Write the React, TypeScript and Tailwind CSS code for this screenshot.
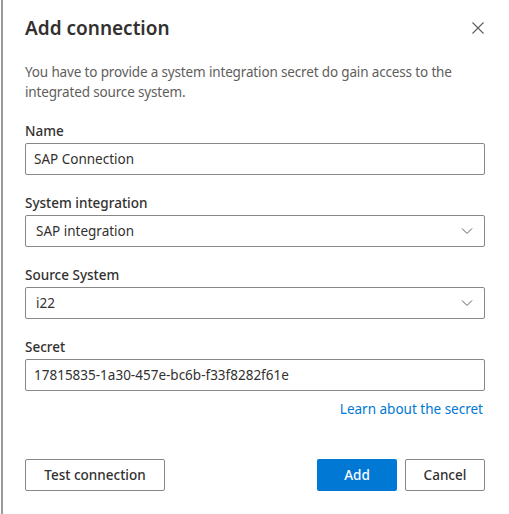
import React from 'react';

const font = { fontFamily: '"Noto Sans", "Open Sans", sans-serif' };

function Chevron() {
  return (
    <svg width="12" height="12" viewBox="0 0 12 12" className="shrink-0">
      <path d="M1 3.5 L6 8.5 L11 3.5" fill="none" stroke="#605e5c" strokeWidth="1" />
    </svg>
  );
}

function Field({ label, value, select }: { label: string; value: string; select?: boolean }) {
  return (
    <div className="flex flex-col">
      <label className="text-[13.5px] leading-[20px] font-medium text-[#323130]">{label}</label>
      <div className="mt-[2px] h-[32px] border border-[#8a8886] rounded-[2px] flex items-center justify-between pl-[8px] pr-[11px]">
        <span className={`text-[13.5px] text-[#323130] ${select ? 'pl-[2px]' : ''}`}>{value}</span>
        {select && <Chevron />}
      </div>
    </div>
  );
}

export default function App() {
  return (
    <div className="w-[509px] h-[514px] bg-white pl-px" style={font}>
      <div className="h-full border-l-2 border-[#9a9a9a] pl-[22px] pr-[24px] pt-[13px] flex flex-col">
        {/* header */}
        <div className="flex items-center justify-between h-[30px]">
          <h1 className="text-[19px] font-semibold text-[#323130] leading-[28px]">Add connection</h1>
          <svg width="12" height="12" viewBox="0 0 12 12" className="mr-px">
            <path d="M0.5 0.5 L11.5 11.5 M11.5 0.5 L0.5 11.5" stroke="#605e5c" strokeWidth="1.1" />
          </svg>
        </div>

        <p className="mt-[19px] text-[13.5px] leading-[20px] text-[#605e5c] tracking-[-0.15px]">
          You have to provide a system integration secret do gain access to the integrated source system.
        </p>

        <div className="mt-[19px] flex flex-col gap-[18px]">
          <Field label="Name" value="SAP Connection" />
          <Field label="System integration" value="SAP integration" select />
          <Field label="Source System" value="i22" select />
          <Field label="Secret" value="17815835-1a30-457e-bc6b-f33f8282f61e" />
        </div>

        <div className="flex justify-end mt-[8px] pr-[2px]">
          <a className="text-[13.5px] leading-[20px] text-[#0078d4]">Learn about the secret</a>
        </div>

        <div className="mt-[40px] flex items-center">
          <button className="h-[32px] w-[140px] border border-[#8a8886] rounded-[2px] text-[13.5px] font-medium text-[#323130]">
            Test connection
          </button>
          <div className="flex-1" />
          <button className="h-[32px] w-[80px] bg-[#0078d4] rounded-[2px] text-[13.5px] font-medium text-white">
            Add
          </button>
          <button className="ml-[8px] h-[32px] w-[80px] border border-[#8a8886] rounded-[2px] text-[13.5px] font-medium text-[#323130]">
            Cancel
          </button>
        </div>
      </div>
    </div>
  );
}
